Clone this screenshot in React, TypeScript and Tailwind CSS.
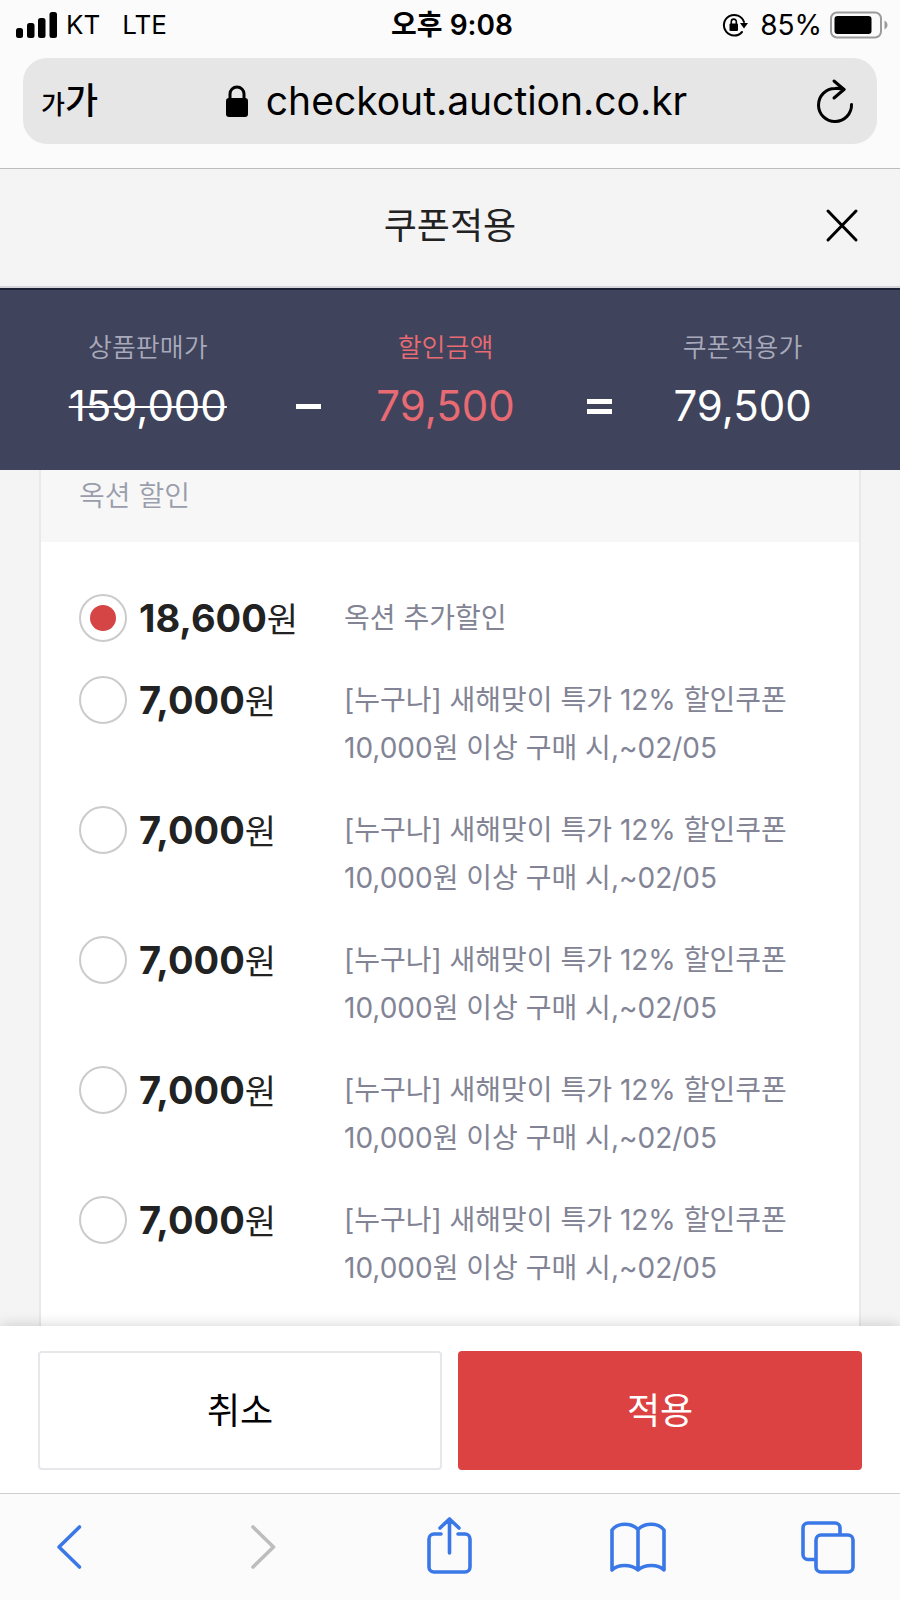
import { useState } from 'react';
import type { ReactNode } from 'react';
import { clsx } from 'clsx';

const coupons = [
  { id: 'extra', amount: '18,600', lines: ['옥션 추가할인'] },
  ...[1, 2, 3, 4, 5].map((n) => ({
    id: `newyear-${n}`,
    amount: '7,000',
    lines: ['[누구나] 새해맞이 특가 12% 할인쿠폰', '10,000원 이상 구매 시,~02/05'],
  })),
];

export default function App() {
  return (
    <div className="min-h-screen flex flex-col bg-[#f4f4f4] text-[#222] font-['Inter','Noto_Sans_CJK_KR',sans-serif]">
      <div className="bg-[#fbfbfb] border-b border-[#bcbcbc] pb-6">
        <StatusBar />
        <AddressBar />
      </div>
      <Title />
      <Summary />
      <CouponList />
      <Actions />
      <Toolbar />
    </div>
  );
}

function StatusBar() {
  return (
    <div className="h-[50px] mb-2 pl-4 pr-3 grid grid-cols-[1fr_auto_1fr] items-center text-[28px] leading-8 text-black">
      <div className="flex items-center text-[26px]">
        <svg className="w-[42px] h-[26px]" viewBox="0 0 42 26" aria-hidden="true">
          <rect x="0" y="16" width="7" height="10" rx="2.5" />
          <rect x="11" y="11" width="7.5" height="15" rx="2.5" />
          <rect x="22" y="6" width="7.5" height="20" rx="2.5" />
          <rect x="33.5" y="0" width="7.5" height="26" rx="2.5" />
        </svg>
        <span className="ml-2">KT</span>
        <span className="ml-[22px]">LTE</span>
      </div>

      <p className="font-semibold">오후 9:08</p>

      <div className="flex items-center justify-end">
        <svg className="w-[26px] h-6" viewBox="0 0 26 24" aria-hidden="true">
          <path d="M22 9A10.3 10.3 0 1 0 20 19" fill="none" stroke="black" strokeWidth="2" strokeLinecap="round" />
          <path d="M18 10H26L22 15.5Z" />
          <rect x="7.5" y="10.5" width="8.5" height="7.5" rx="1" />
          <path d="M9.3 11V8.6a2.5 2.5 0 0 1 5 0V11" fill="none" stroke="black" strokeWidth="1.6" />
        </svg>
        <span className="ml-3">85%</span>
        <svg className="ml-2 w-[58px] h-7" viewBox="0 0 58 28" aria-hidden="true">
          <rect x="1" y="1.5" width="50" height="25" rx="6" fill="none" stroke="#9b9b9b" strokeWidth="2" />
          <rect x="4.5" y="5" width="37" height="18" rx="3" />
          <path d="M54.5 9.5c4 2 4 7 0 9Z" fill="#9b9b9b" />
        </svg>
      </div>
    </div>
  );
}

function AddressBar() {
  return (
    <div className="h-[86px] mx-[23px] pl-[18px] pr-[22px] flex items-center justify-between rounded-3xl bg-[#e6e6e6] text-black">
      <button className="flex items-baseline font-medium" aria-label="텍스트 크기">
        <span className="text-[26px]">가</span>
        <span className="text-[36px] leading-12">가</span>
      </button>
      <div className="flex items-center gap-[18px]">
        <svg className="w-[22px] h-8" viewBox="0 0 22 32" aria-hidden="true">
          <rect x="0" y="13" width="22" height="19" rx="3" />
          <path d="M4 14V9a7 7 0 0 1 14 0v5" fill="none" stroke="black" strokeWidth="3" />
        </svg>
        <span className="text-[39px] leading-12">checkout.auction.co.kr</span>
      </div>
      <button aria-label="새로고침">
        <svg className="w-10 h-[46px]" viewBox="0 0 40 46" fill="none" stroke="black" strokeWidth="3" strokeLinecap="round" strokeLinejoin="round">
          <path d="M36.5 26.5A16.5 16.5 0 1 1 20 10.5Q25 10 29 11.5" />
          <path d="M19 3L29 11.5L19 20" />
        </svg>
      </button>
    </div>
  );
}

function Title() {
  return (
    <header className="h-[119px] px-[38px] pb-1 grid grid-cols-[1fr_auto_1fr] items-center border-b-2 border-[#d6d6da]">
      <h1 className="col-start-2 text-[36px] leading-12">쿠폰적용</h1>
      <button className="justify-self-end" aria-label="닫기">
        <svg className="w-10 h-10" viewBox="0 0 40 40" fill="none" stroke="black" strokeWidth="3" strokeLinecap="round">
          <path d="M6 5L34 34M34 5L6 34" />
        </svg>
      </button>
    </header>
  );
}

function Summary() {
  return (
    <section className="h-[182px] pt-[2px] pr-[43px] grid grid-cols-[296fr_24fr_250fr_58fr_229fr] content-center items-end justify-items-center border-t-2 border-[#1f2135] bg-[#3f435b] text-white">
      <Price label="상품판매가" value="159,000" className="line-through decoration-2" labelClassName="text-[#a8aabb]" />
      <Operator lines={1} />
      <Price label="할인금액" value="79,500" className="text-[#e86b73]" labelClassName="text-[#e86b73]" />
      <Operator lines={2} />
      <Price label="쿠폰적용가" value="79,500" labelClassName="text-[#a8aabb]" />
    </section>
  );
}

function Price({ label, value, className, labelClassName }: { label: string, value: string, className?: string, labelClassName?: string }) {
  return (
    <div className="flex flex-col items-center gap-[10px]">
      <p className={clsx('text-[26px] leading-10 font-[350]', labelClassName)}>{label}</p>
      <p className={clsx('text-[42px] leading-14', className)}>{value}</p>
    </div>
  );
}

// sits on the same line as the amounts, so it takes their line height
function Operator({ lines }: { lines: number }) {
  return (
    <div className="w-[25px] h-14 flex flex-col justify-center gap-[5px]" role="img" aria-label={lines === 1 ? '빼기' : '같음'}>
      <span className="h-[5px] bg-white" />
      {lines === 2 && <span className="h-[5px] bg-white" />}
    </div>
  );
}

function CouponList() {
  const [selected, setSelected] = useState('extra');

  return (
    <main className="flex-1 px-[39px]">
      <fieldset className="h-full border-x-2 border-[#e9e9e9] bg-white">
        <legend className="float-left w-full h-[72px] px-[38px] pt-[6px] bg-[#f7f7f7] text-[28px] leading-10 font-[350] text-[#9a9dac]">
          옥션 할인
        </legend>
        <div className="clear-both pt-[52px] pb-[34px] px-[38px] flex flex-col gap-[34px]">
          {coupons.map((coupon) => (
            <label key={coupon.id} className="flex items-start">
              <input
                type="radio"
                name="coupon"
                className="appearance-none shrink-0 size-12 grid place-content-center rounded-full border-2 border-[#cbcbcb] bg-white before:size-[26px] before:rounded-full checked:before:bg-[#d64545]"
                checked={selected === coupon.id}
                onChange={() => setSelected(coupon.id)}
              />
              <span className="ml-3 w-[205px] h-12 shrink-0 text-[34px] leading-12">
                <b className="text-[38px]">{coupon.amount}</b>원
              </span>
              <span className="text-[28px] leading-12 text-[#828495]">
                {coupon.lines.map((line) => <span key={line} className="block">{line}</span>)}
              </span>
            </label>
          ))}
        </div>
      </fieldset>
    </main>
  );
}

function Actions() {
  return (
    <div className="relative px-[38px] pt-[25px] pb-[23px] grid grid-cols-2 gap-4 bg-white shadow-[0_0_14px_rgba(0,0,0,0.18)] text-[36px]">
      <button className="h-[119px] rounded border-2 border-[#e6e7ea] text-black">취소</button>
      <button className="h-[119px] rounded bg-[#dc4242] text-white">적용</button>
    </div>
  );
}

function ToolButton({ label, disabled, children }: { label: string, disabled?: boolean, children: ReactNode }) {
  return (
    <button aria-label={label} disabled={disabled} className="text-[#3b78e7] disabled:text-[#bdbdbd]">
      <svg className="w-14 h-[60px]" viewBox="0 0 56 60" fill="none" stroke="currentColor" strokeWidth="3.6" strokeLinecap="round" strokeLinejoin="round">
        {children}
      </svg>
    </button>
  );
}

function Toolbar() {
  return (
    <nav className="relative h-[107px] pl-[41px] pr-[45px] pt-[22px] flex items-start justify-between border-t border-[#cfcfcf] bg-[#fbfbfb]">
      <ToolButton label="뒤로">
        <path d="M38.5 11L18 31L38.5 51" />
      </ToolButton>
      <ToolButton label="앞으로" disabled>
        <path d="M22 11L42.5 31L22 51" />
      </ToolButton>
      <ToolButton label="공유">
        <path d="M21 18H14a5 5 0 0 0-5 5V51a5 5 0 0 0 5 5H45a5 5 0 0 0 5-5V23a5 5 0 0 0-5-5H38" />
        <path d="M29.5 37V3M20 12L29.5 3L39 12" />
      </ToolButton>
      <ToolButton label="책갈피">
        <path d="M2 14C8 6.5 21 6.5 28 13.5C35 6.5 48 6.5 54 14V54C48 48 35 48 28 54C21 48 8 48 2 54ZM28 14V54" />
      </ToolButton>
      <ToolButton label="탭">
        <rect x="17" y="19" width="37" height="37" rx="5" />
        <path d="M16 43.5H9a5 5 0 0 1-5-5V12a5 5 0 0 1 5-5H36a5 5 0 0 1 5 5V18" />
      </ToolButton>
    </nav>
  );
}
